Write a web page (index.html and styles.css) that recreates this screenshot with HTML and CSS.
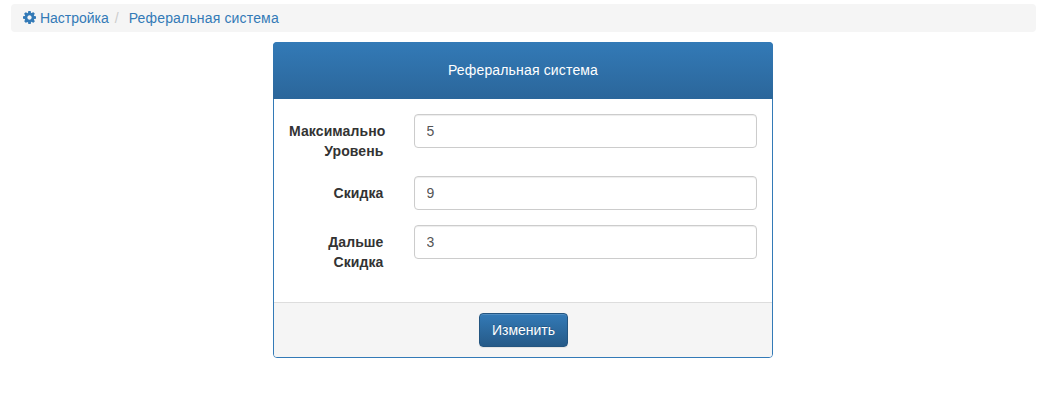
FILE: index.html
```html
<!DOCTYPE html>
<html lang="ru">
<head>
<meta charset="utf-8">
<title>Реферальная система</title>
<link rel="stylesheet" href="styles.css">
</head>
<body>
<div class="page">
  <ol class="breadcrumb">
    <li class="crumb">
      <a href="#" class="crumb-link">
        <svg class="gear" viewBox="128 128 1536 1536" aria-hidden="true"><path d="M1152 896q0-106-75-181t-181-75-181 75-75 181 75 181 181 75 181-75 75-181zm512-109v222q0 12-8 23t-20 13l-185 28q-19 54-39 91 35 50 107 138 10 12 10 25t-9 23q-27 37-99 108t-94 71q-12 0-26-9l-138-108q-44 23-91 38-16 136-29 186-7 28-36 28h-222q-14 0-24.5-8.5t-11.5-21.5l-28-184q-49-16-90-37l-141 107q-10 9-25 9-14 0-25-11-126-114-165-168-7-10-7-23 0-12 8-23 15-21 51-66.5t54-70.5q-27-50-41-99l-183-27q-13-2-21-12.5t-8-23.5v-222q0-12 8-23t19-13l186-28q14-46 39-92-40-57-107-138-10-12-10-24 0-10 9-23 26-36 98.5-107.5t94.5-71.5q13 0 26 10l138 107q44-23 91-38 16-136 29-186 7-28 36-28h222q14 0 24.5 8.5t11.5 21.5l28 184q49 16 90 37l142-107q9-9 24-9 13 0 25 10 129 119 165 170 7 8 7 22 0 12-8 23-15 21-51 66.5t-54 70.5q26 50 41 98l183 28q13 2 21 12.5t8 23.5z"/></svg>
        Настройка
      </a>
    </li>
    <li class="sep">/</li>
    <li class="crumb"><a href="#" class="crumb-link wide-text">Реферальная система</a></li>
  </ol>

  <form class="panel">
    <div class="panel-heading wide-text">Реферальная система</div>
    <div class="panel-body">
      <div class="form-row">
        <label class="form-label" for="f1">Максимально Уровень</label>
        <div class="form-field"><input id="f1" class="form-input" type="text" value="5"></div>
      </div>
      <div class="form-row">
        <label class="form-label" for="f2">Скидка</label>
        <div class="form-field"><input id="f2" class="form-input" type="text" value="9"></div>
      </div>
      <div class="form-row">
        <label class="form-label" for="f3">Дальше Скидка</label>
        <div class="form-field"><input id="f3" class="form-input" type="text" value="3"></div>
      </div>
    </div>
    <div class="panel-footer">
      <button type="button" class="btn">Изменить</button>
    </div>
  </form>
</div>
</body>
</html>
```

FILE: styles.css
```css
* {
  box-sizing: border-box;
}

html,
body {
  margin: 0;
  padding: 0;
  background: #fff;
}

body {
  font-family: "Liberation Sans", Arial, sans-serif;
  font-size: 14px;
  line-height: 20px;
  color: #333;
}

.page {
  width: 1025px;
  margin-left: 11px;
  padding-top: 4px;
}

.breadcrumb {
  display: flex;
  align-items: center;
  height: 28px;
  margin: 0 0 10px;
  padding: 0 12px;
  list-style: none;
  background: #f5f5f5;
  border-radius: 4px;
}

.crumb-link {
  color: #337ab7;
  text-decoration: none;
}

.wide-text {
  letter-spacing: 0.16px;
}

.gear {
  width: 13px;
  height: 13px;
  fill: #337ab7;
  vertical-align: -1px;
}

.sep {
  padding: 0 10px 0 6px;
  color: #ccc;
}

.panel {
  width: 500px;
  margin-left: 262px;
  background: #fff;
  border: 1px solid #337ab7;
  border-radius: 4px;
}

.panel-heading {
  height: 57px;
  margin: -1px -1px 0;
  padding-top: 18px;
  color: #fff;
  text-align: center;
  background: linear-gradient(to bottom, #337ab7, #2b669a);
  border-radius: 4px 4px 0 0;
}

.panel-body {
  padding: 15px 15px 0;
}

.form-row {
  display: grid;
  grid-template-columns: 94.5px 1fr;
  column-gap: 30px;
  margin-bottom: 15px;
}

.form-row:last-child {
  margin-bottom: 30px;
}

.form-label {
  padding-top: 7px;
  font-weight: 700;
  letter-spacing: 0.1px;
  text-align: right;
}

.form-input {
  display: block;
  width: 100%;
  height: 34px;
  padding: 6px 12px;
  font: inherit;
  color: #555;
  background: #fff;
  border: 1px solid #ccc;
  border-radius: 4px;
  box-shadow: inset 0 1px 1px rgba(0, 0, 0, 0.075);
}

.panel-footer {
  display: flex;
  justify-content: center;
  height: 55px;
  padding-top: 10px;
  background: #f5f5f5;
  border-top: 1px solid #ddd;
  border-radius: 0 0 3px 3px;
}

.btn {
  width: 89px;
  height: 34px;
  padding: 0 0 0 1px;
  font: inherit;
  color: #fff;
  text-shadow: 0 -1px 0 rgba(0, 0, 0, 0.2);
  background: linear-gradient(to bottom, #337ab7, #265a88);
  border: 1px solid #245580;
  border-radius: 4px;
  box-shadow: inset 0 1px 0 rgba(255, 255, 255, 0.15), 0 1px 1px rgba(0, 0, 0, 0.075);
}
```
